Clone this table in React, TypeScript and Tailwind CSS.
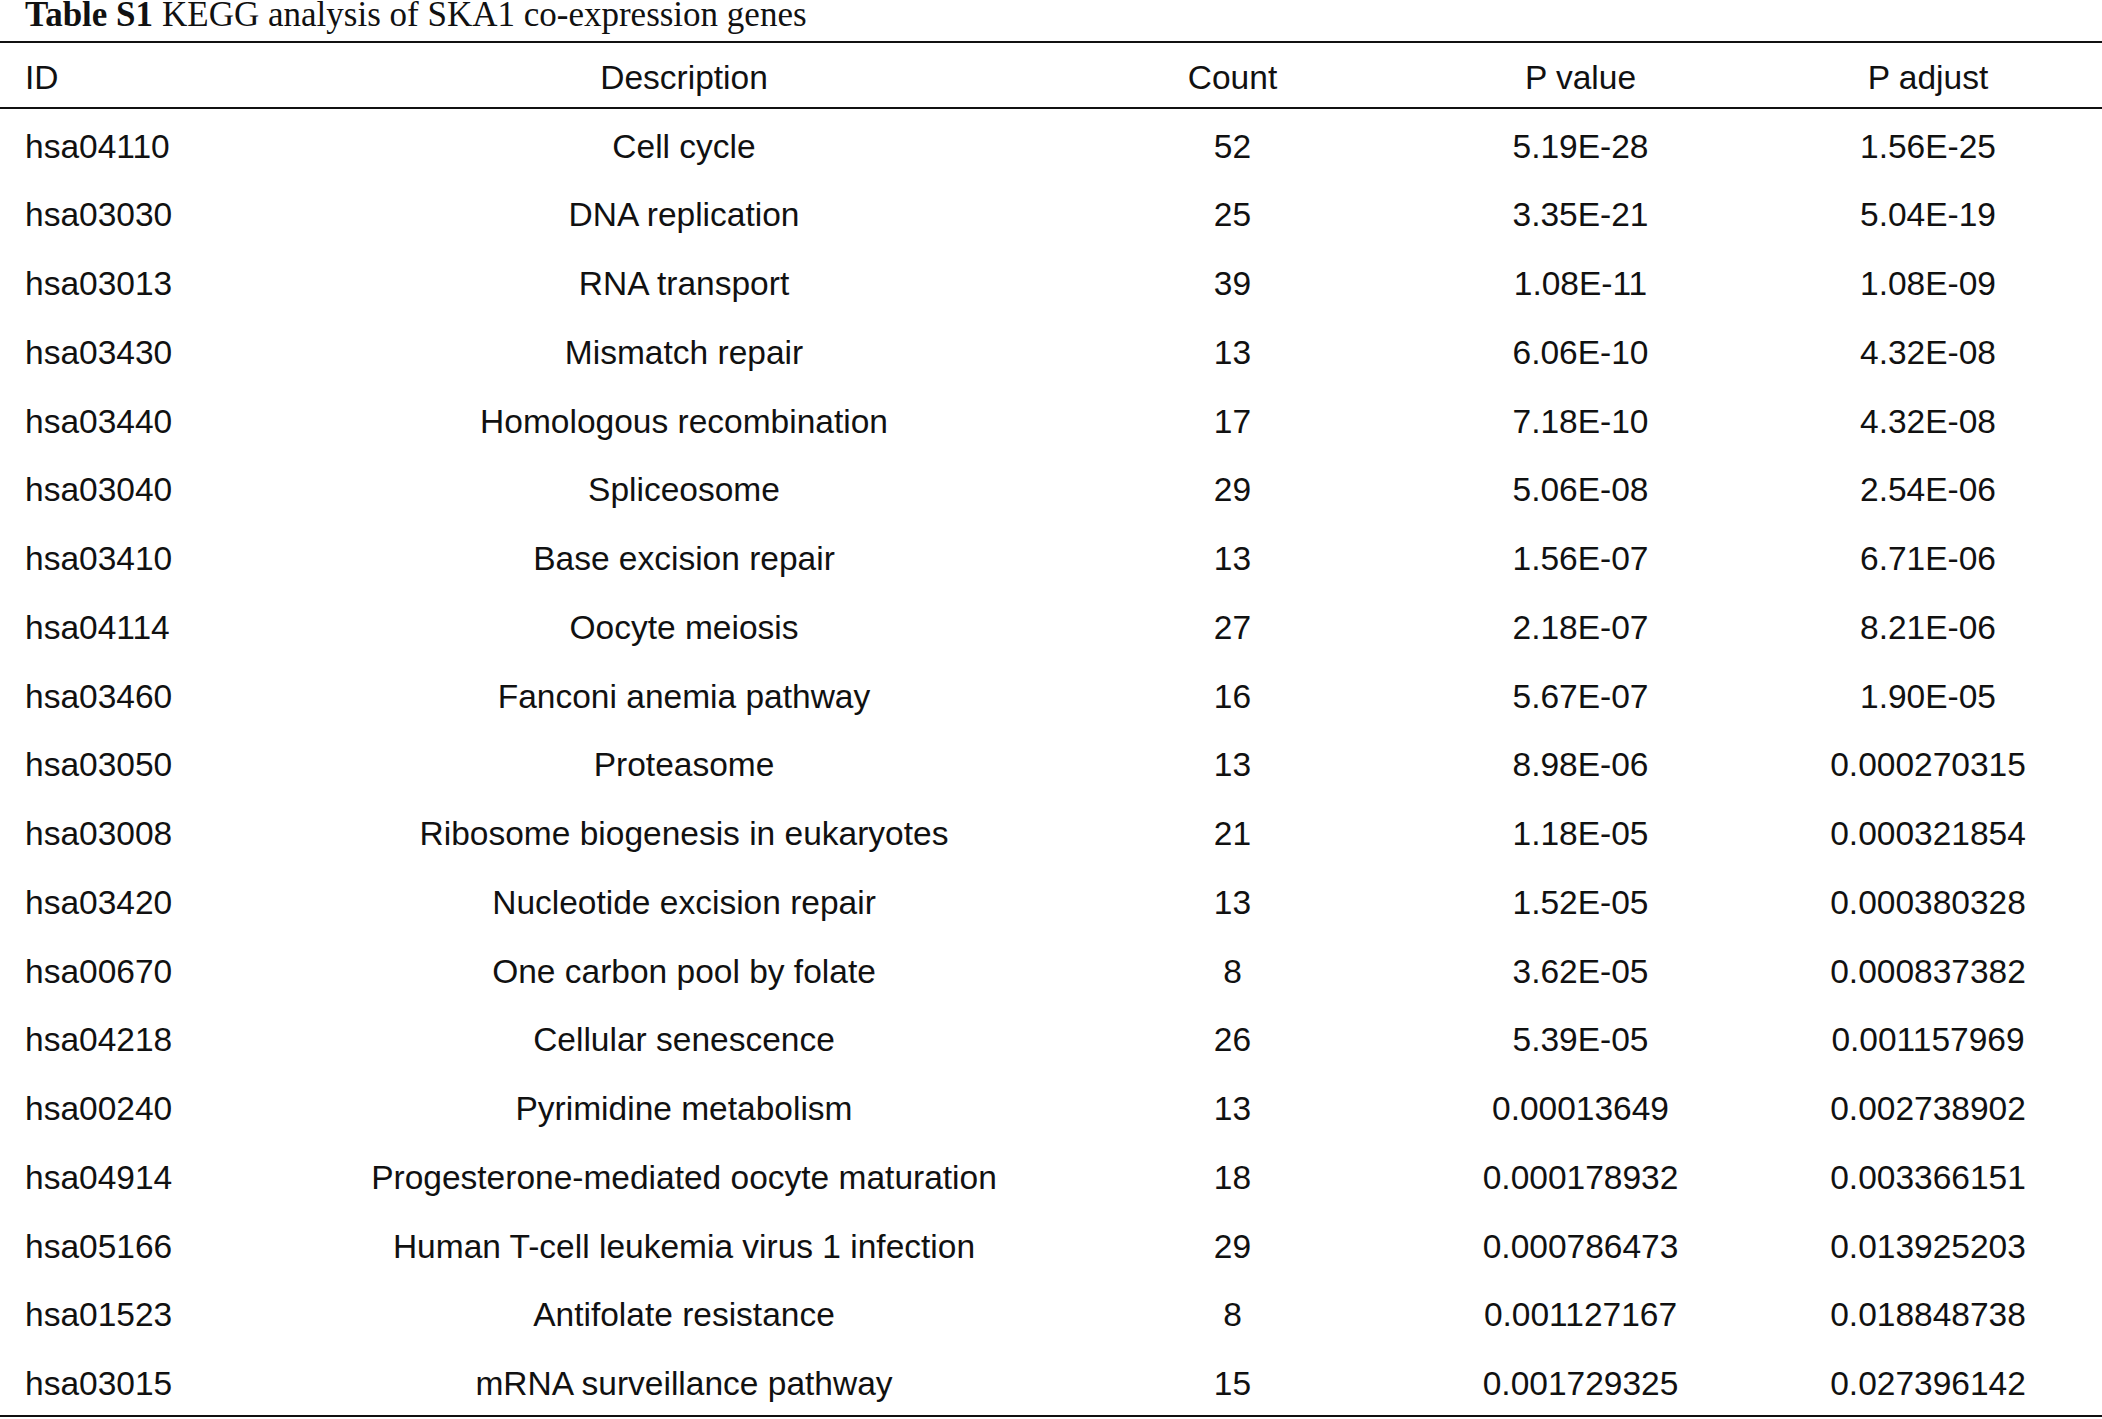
const rows: [string, string, string, string, string][] = [
  ["hsa04110", "Cell cycle", "52", "5.19E-28", "1.56E-25"],
  ["hsa03030", "DNA replication", "25", "3.35E-21", "5.04E-19"],
  ["hsa03013", "RNA transport", "39", "1.08E-11", "1.08E-09"],
  ["hsa03430", "Mismatch repair", "13", "6.06E-10", "4.32E-08"],
  ["hsa03440", "Homologous recombination", "17", "7.18E-10", "4.32E-08"],
  ["hsa03040", "Spliceosome", "29", "5.06E-08", "2.54E-06"],
  ["hsa03410", "Base excision repair", "13", "1.56E-07", "6.71E-06"],
  ["hsa04114", "Oocyte meiosis", "27", "2.18E-07", "8.21E-06"],
  ["hsa03460", "Fanconi anemia pathway", "16", "5.67E-07", "1.90E-05"],
  ["hsa03050", "Proteasome", "13", "8.98E-06", "0.000270315"],
  ["hsa03008", "Ribosome biogenesis in eukaryotes", "21", "1.18E-05", "0.000321854"],
  ["hsa03420", "Nucleotide excision repair", "13", "1.52E-05", "0.000380328"],
  ["hsa00670", "One carbon pool by folate", "8", "3.62E-05", "0.000837382"],
  ["hsa04218", "Cellular senescence", "26", "5.39E-05", "0.001157969"],
  ["hsa00240", "Pyrimidine metabolism", "13", "0.00013649", "0.002738902"],
  ["hsa04914", "Progesterone-mediated oocyte maturation", "18", "0.000178932", "0.003366151"],
  ["hsa05166", "Human T-cell leukemia virus 1 infection", "29", "0.000786473", "0.013925203"],
  ["hsa01523", "Antifolate resistance", "8", "0.001127167", "0.018848738"],
  ["hsa03015", "mRNA surveillance pathway", "15", "0.001729325", "0.027396142"],
];

// column widths: ID | Description | Count | P value | P adjust
const grid = "grid grid-cols-[310px_748px_349px_347px_1fr]";

export default function App() {
  return (
    <div className="w-[2102px] h-[1419px] bg-white text-[#111] overflow-hidden">
      {/* Caption */}
      <div className="h-[41px] pl-[25px] font-['Liberation_Serif',serif] text-[35px] leading-[30px] whitespace-nowrap">
        <span className="font-bold">Table S1</span>
        <span className="ml-[9px]">KEGG analysis of SKA1 co-expression genes</span>
      </div>

      <div className="font-['Liberation_Sans',Arial,sans-serif] text-[33.5px] leading-none border-t-2 border-b-2 border-[#111]">
        {/* Header */}
        <div className={`${grid} h-[66px] pt-[5px] items-center border-b-2 border-[#111]`}>
          <div className="pl-[25px]">ID</div>
          <div className="text-center">Description</div>
          <div className="text-center">Count</div>
          <div className="text-center">P value</div>
          <div className="text-center">P adjust</div>
        </div>

        {/* Body */}
        {rows.map(([id, desc, count, p, padj]) => (
          <div key={id} className={`${grid} h-[68.75px] pt-[6px] items-center`}>
            <div className="pl-[25px]">{id}</div>
            <div className="text-center">{desc}</div>
            <div className="text-center">{count}</div>
            <div className="text-center">{p}</div>
            <div className="text-center">{padj}</div>
          </div>
        ))}
      </div>
    </div>
  );
}
